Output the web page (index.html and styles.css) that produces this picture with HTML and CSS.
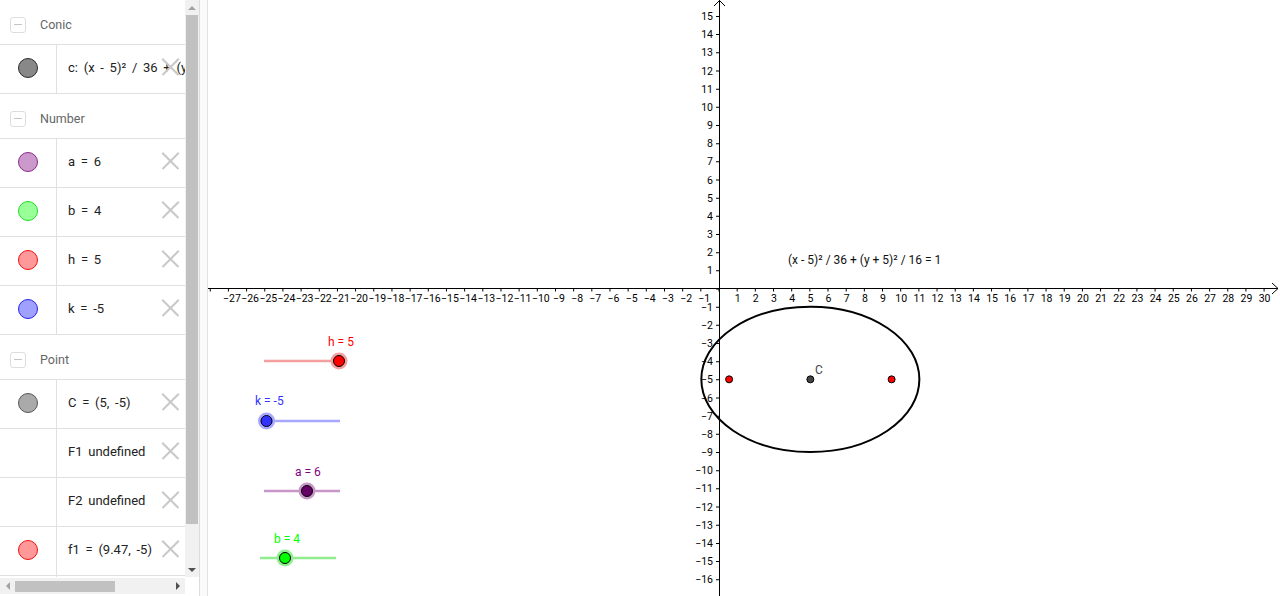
FILE: index.html
```html
<!DOCTYPE html>
<html>
<head>
<meta charset="utf-8">
<link rel="stylesheet" href="styles.css">
</head>
<body>
<div class="app">
  <aside class="algebra">
    <div class="av-main">
      <div class="av-list">
        <div class="group-head"><span class="toggle"></span><span class="group-name">Conic</span></div>
        <div class="item"><div class="marker"><span class="dot dot-conic"></span></div><div class="expr">c: (x - 5)² / 36 + (y + 5)² / 16 = 1</div><span class="del"></span></div>
        <div class="group-head"><span class="toggle"></span><span class="group-name">Number</span></div>
        <div class="item"><div class="marker"><span class="dot dot-a"></span></div><div class="expr">a = 6</div><span class="del"></span></div>
        <div class="item"><div class="marker"><span class="dot dot-b"></span></div><div class="expr">b = 4</div><span class="del"></span></div>
        <div class="item"><div class="marker"><span class="dot dot-h"></span></div><div class="expr">h = 5</div><span class="del"></span></div>
        <div class="item"><div class="marker"><span class="dot dot-k"></span></div><div class="expr">k = -5</div><span class="del"></span></div>
        <div class="group-head"><span class="toggle"></span><span class="group-name">Point</span></div>
        <div class="item"><div class="marker"><span class="dot dot-c"></span></div><div class="expr">C = (5, -5)</div><span class="del"></span></div>
        <div class="item"><div class="marker"></div><div class="expr">F1 undefined</div><span class="del"></span></div>
        <div class="item"><div class="marker"></div><div class="expr">F2 undefined</div><span class="del"></span></div>
        <div class="item"><div class="marker"><span class="dot dot-h"></span></div><div class="expr">f1 = (9.47, -5)</div><span class="del"></span></div>
        <div class="item"><div class="marker"></div><div class="expr"></div></div>
      </div>
      <div class="vscroll">
        <span class="arrow-up"></span>
        <div class="vtrack"><div class="vthumb"></div></div>
        <span class="arrow-down"></span>
      </div>
    </div>
    <div class="hbar">
      <div class="hscroll">
        <span class="arrow-left"></span>
        <div class="htrack"><div class="hthumb"></div></div>
        <span class="arrow-right"></span>
      </div>
      <div class="corner"></div>
    </div>
  </aside>
  <div class="splitter"></div>
  <main class="graphics">
    <svg class="canvas" width="1072" height="596" viewBox="208 0 1072 596" xmlns="http://www.w3.org/2000/svg">
      <line x1="208" y1="288.5" x2="1278" y2="288.5" class="axis"/>
      <polyline points="1272,283 1278,288.5 1272,294" class="axis-arrow"/>
      <line x1="719.5" y1="0" x2="719.5" y2="596" class="axis"/>
      <polyline points="714,6 719.5,0.5 725,6" class="axis-arrow"/>
      <line x1="209.74" y1="290" x2="1276" y2="290" class="ticks"/>
      <line x1="717.5" y1="-2.22" x2="717.5" y2="596" class="ticks"/>

      <g class="xlabels">
        <text x="231.9" y="301.5">−27</text><text x="250.1" y="301.5">−26</text><text x="268.3" y="301.5">−25</text>
        <text x="286.4" y="301.5">−24</text><text x="304.6" y="301.5">−23</text><text x="322.8" y="301.5">−22</text>
        <text x="340.9" y="301.5">−21</text><text x="359.1" y="301.5">−20</text><text x="377.3" y="301.5">−19</text>
        <text x="395.4" y="301.5">−18</text><text x="413.6" y="301.5">−17</text><text x="431.8" y="301.5">−16</text>
        <text x="450.0" y="301.5">−15</text><text x="468.1" y="301.5">−14</text><text x="486.3" y="301.5">−13</text>
        <text x="504.5" y="301.5">−12</text><text x="522.6" y="301.5">−11</text><text x="540.8" y="301.5">−10</text>
        <text x="559.0" y="301.5">−9</text><text x="577.1" y="301.5">−8</text><text x="595.3" y="301.5">−7</text>
        <text x="613.5" y="301.5">−6</text><text x="631.7" y="301.5">−5</text><text x="649.8" y="301.5">−4</text>
        <text x="668.0" y="301.5">−3</text><text x="686.2" y="301.5">−2</text><text x="704.3" y="301.5">−1</text>
        <text x="737.7" y="301.5">1</text><text x="755.8" y="301.5">2</text><text x="774.0" y="301.5">3</text>
        <text x="792.2" y="301.5">4</text><text x="810.4" y="301.5">5</text><text x="828.5" y="301.5">6</text>
        <text x="846.7" y="301.5">7</text><text x="864.9" y="301.5">8</text><text x="883.0" y="301.5">9</text>
        <text x="901.2" y="301.5">10</text><text x="919.4" y="301.5">11</text><text x="937.5" y="301.5">12</text>
        <text x="955.7" y="301.5">13</text><text x="973.9" y="301.5">14</text><text x="992.1" y="301.5">15</text>
        <text x="1010.2" y="301.5">16</text><text x="1028.4" y="301.5">17</text><text x="1046.6" y="301.5">18</text>
        <text x="1064.7" y="301.5">19</text><text x="1082.9" y="301.5">20</text><text x="1101.1" y="301.5">21</text>
        <text x="1119.2" y="301.5">22</text><text x="1137.4" y="301.5">23</text><text x="1155.6" y="301.5">24</text>
        <text x="1173.8" y="301.5">25</text><text x="1191.9" y="301.5">26</text><text x="1210.1" y="301.5">27</text>
        <text x="1228.3" y="301.5">28</text><text x="1246.4" y="301.5">29</text><text x="1264.6" y="301.5">30</text>
      </g>
      <g class="ylabels">
        <text x="713" y="20.0">15</text><text x="713" y="38.1">14</text><text x="713" y="56.3">13</text>
        <text x="713" y="74.5">12</text><text x="713" y="92.6">11</text><text x="713" y="110.8">10</text>
        <text x="713" y="129.0">9</text><text x="713" y="147.1">8</text><text x="713" y="165.3">7</text>
        <text x="713" y="183.5">6</text><text x="713" y="201.7">5</text><text x="713" y="219.8">4</text>
        <text x="713" y="238.0">3</text><text x="713" y="256.2">2</text><text x="713" y="274.3">1</text>
        <text x="713" y="310.7">−1</text><text x="713" y="328.8">−2</text><text x="713" y="347.0">−3</text>
        <text x="713" y="365.2">−4</text><text x="713" y="383.4">−5</text><text x="713" y="401.5">−6</text>
        <text x="713" y="419.7">−7</text><text x="713" y="437.9">−8</text><text x="713" y="456.0">−9</text>
        <text x="713" y="474.2">−10</text><text x="713" y="492.4">−11</text><text x="713" y="510.5">−12</text>
        <text x="713" y="528.7">−13</text><text x="713" y="546.9">−14</text><text x="713" y="565.1">−15</text>
        <text x="713" y="583.2">−16</text>
      </g>

      <ellipse cx="810.35" cy="379.35" rx="109.02" ry="72.68" class="conic"/>
      <text x="788" y="264" class="eq">(x - 5)² / 36 + (y + 5)² / 16 = 1</text>

      <circle cx="729.1" cy="379.35" r="3.5" class="pt-red"/>
      <circle cx="891.6" cy="379.35" r="3.5" class="pt-red"/>
      <circle cx="810.35" cy="379.35" r="3.5" class="pt-c"/>
      <text x="815" y="374" class="lbl-c">C</text>

      <line x1="264" y1="361" x2="340" y2="361" class="track track-h"/>
      <circle cx="339" cy="361" r="8.5" class="halo halo-h"/>
      <circle cx="339" cy="361" r="5.5" class="knob knob-h"/>
      <text x="328" y="345.5" class="slbl slbl-h">h = 5</text>

      <line x1="266" y1="421" x2="340" y2="421" class="track track-k"/>
      <circle cx="266.5" cy="421" r="8.5" class="halo halo-k"/>
      <circle cx="266.5" cy="421" r="5.5" class="knob knob-k"/>
      <text x="255" y="405" class="slbl slbl-k">k = -5</text>

      <line x1="264" y1="491" x2="340" y2="491" class="track track-a"/>
      <circle cx="307" cy="491" r="8.5" class="halo halo-a"/>
      <circle cx="307" cy="491" r="5.5" class="knob knob-a"/>
      <text x="295" y="476" class="slbl slbl-a">a = 6</text>

      <line x1="260" y1="558" x2="336" y2="558" class="track track-b"/>
      <circle cx="285" cy="558" r="8.5" class="halo halo-b"/>
      <circle cx="285" cy="558" r="5.5" class="knob knob-b"/>
      <text x="274" y="542.5" class="slbl slbl-b">b = 4</text>
    </svg>
  </main>
</div>
</body>
</html>
```
FILE: styles.css
```css
html, body {
  margin: 0;
  padding: 0;
  background: #fff;
  overflow: hidden;
}

.app {
  display: flex;
  width: 1280px;
  height: 596px;
  font-family: Roboto, "Liberation Sans", sans-serif;
}

/* ---------- algebra view ---------- */
.algebra {
  width: 199px;
  flex: none;
  display: flex;
  flex-direction: column;
  border-right: 1px solid #dcdcdc;
}

.av-main {
  flex: 1;
  display: flex;
  min-height: 0;
  overflow: hidden;
}

.av-list {
  width: 185px;
  flex: none;
  overflow: hidden;
}

.group-head {
  height: 45px;
  box-sizing: border-box;
  padding-top: 5px;
  border-bottom: 1px solid #e0e0e0;
  display: flex;
  align-items: center;
}

.toggle {
  width: 14px;
  height: 14px;
  margin-left: 10px;
  border: 1px solid #dedede;
  border-radius: 3px;
  display: flex;
  align-items: center;
  justify-content: center;
}

.toggle::before {
  content: "";
  width: 8px;
  height: 1px;
  background: #c4c4c4;
}

.group-name {
  margin-left: 14px;
  font-size: 12.5px;
  color: #666;
}

.item {
  height: 49px;
  box-sizing: border-box;
  padding-bottom: 3px;
  border-bottom: 1px solid #e0e0e0;
  display: flex;
  position: relative;
}

.marker {
  width: 56px;
  flex: none;
  margin-bottom: -3px;
  padding-bottom: 3px;
  border-right: 1px solid #e0e0e0;
  display: flex;
  align-items: center;
  justify-content: center;
}

.dot {
  width: 18px;
  height: 18px;
  border-radius: 50%;
  border: 1px solid;
}

.dot-conic { background: #888; border-color: #2a2a2a; }
.dot-a { background: #cc99cc; border-color: #8a2a8a; }
.dot-b { background: #99ff99; border-color: #22dd22; }
.dot-h { background: #ff9999; border-color: #ee1111; }
.dot-k { background: #a0a0ff; border-color: #2222ee; }
.dot-c { background: #aaa; border-color: #555; }

.expr {
  padding-left: 11px;
  display: flex;
  align-items: center;
  white-space: pre;
  font-size: 13px;
  word-spacing: 2.5px;
  color: #222;
}

.del {
  position: absolute;
  left: 162px;
  top: 13px;
  width: 17px;
  height: 17px;
}

.del::before,
.del::after {
  content: "";
  position: absolute;
  left: -3px;
  top: 7.5px;
  width: 23px;
  height: 1.6px;
  background: #c8c8c8;
  transform: rotate(45deg);
}

.del::after {
  transform: rotate(-45deg);
}

/* vertical scrollbar */
.vscroll {
  width: 14px;
  flex: none;
  background: #f1f1f1;
  display: flex;
  flex-direction: column;
  align-items: center;
}

.arrow-up,
.arrow-down {
  height: 15px;
  flex: none;
  display: flex;
  align-items: center;
}

.arrow-up::before {
  content: "";
  border-left: 4px solid transparent;
  border-right: 4px solid transparent;
  border-bottom: 4px solid #a3a3a3;
}

.arrow-down::before {
  content: "";
  border-left: 4px solid transparent;
  border-right: 4px solid transparent;
  border-top: 4px solid #505050;
}

.vtrack {
  flex: 1;
  width: 100%;
  display: flex;
  justify-content: center;
}

.vthumb {
  width: 12px;
  height: 509px;
  background: #c1c1c1;
}

/* horizontal scrollbar */
.hbar {
  height: 19px;
  flex: none;
  display: flex;
}

.hscroll {
  width: 185px;
  height: 16px;
  margin-top: 1px;
  background: #f1f1f1;
  display: flex;
  align-items: center;
}

.arrow-left,
.arrow-right {
  width: 15px;
  flex: none;
  display: flex;
  justify-content: center;
}

.arrow-left::before {
  content: "";
  border-top: 4px solid transparent;
  border-bottom: 4px solid transparent;
  border-right: 4px solid #a3a3a3;
}

.arrow-right::before {
  content: "";
  border-top: 4px solid transparent;
  border-bottom: 4px solid transparent;
  border-left: 4px solid #505050;
}

.htrack {
  flex: 1;
  height: 100%;
  display: flex;
  align-items: center;
}

.hthumb {
  width: 100px;
  height: 11px;
  background: #c1c1c1;
}

.corner {
  flex: 1;
  background: #fff;
}

/* ---------- splitter ---------- */
.splitter {
  width: 7px;
  flex: none;
  background: #fafafa;
  border-right: 1px solid #e2e2e2;
}

/* ---------- graphics ---------- */
.graphics {
  flex: 1;
  overflow: hidden;
}

.canvas {
  display: block;
}

.axis {
  stroke: #000;
  stroke-width: 1;
}

.axis-arrow {
  fill: none;
  stroke: #000;
  stroke-width: 1;
}

.ticks {
  stroke: #000;
  stroke-width: 3;
  stroke-dasharray: 1 17.17;
}

.xlabels text,
.ylabels text {
  font-family: Roboto, "Liberation Sans", sans-serif;
  font-size: 10.5px;
  fill: #000;
}

.xlabels text { text-anchor: middle; }
.ylabels text { text-anchor: end; }

.conic {
  fill: none;
  stroke: #000;
  stroke-width: 2;
}

.eq {
  font-family: Roboto, "Liberation Sans", sans-serif;
  font-size: 12px;
  fill: #111;
}

.pt-red {
  fill: #ff0000;
  stroke: #000;
  stroke-width: 1;
}

.pt-c {
  fill: #444;
  stroke: #000;
  stroke-width: 1;
}

.lbl-c {
  font-family: Roboto, "Liberation Sans", sans-serif;
  font-size: 12px;
  fill: #444;
}

.track {
  stroke-width: 2.5;
}

.track-h { stroke: #f4a0a0; }
.track-k { stroke: #a8a8ff; }
.track-a { stroke: #c896c8; }
.track-b { stroke: #90ee90; }

.halo { stroke: none; }
.halo-h { fill: #f4a0a0; }
.halo-k { fill: #a8a8ff; }
.halo-a { fill: #c896c8; }
.halo-b { fill: #90ee90; }

.knob {
  stroke: #000;
  stroke-width: 1;
}

.knob-h { fill: #ff0000; }
.knob-k { fill: #3333ff; }
.knob-a { fill: #660066; }
.knob-b { fill: #00ff00; }

.slbl {
  font-family: Roboto, "Liberation Sans", sans-serif;
  font-size: 12px;
}

.slbl-h { fill: #ff0000; }
.slbl-k { fill: #3333ff; }
.slbl-a { fill: #800080; }
.slbl-b { fill: #00ff00; }
```
